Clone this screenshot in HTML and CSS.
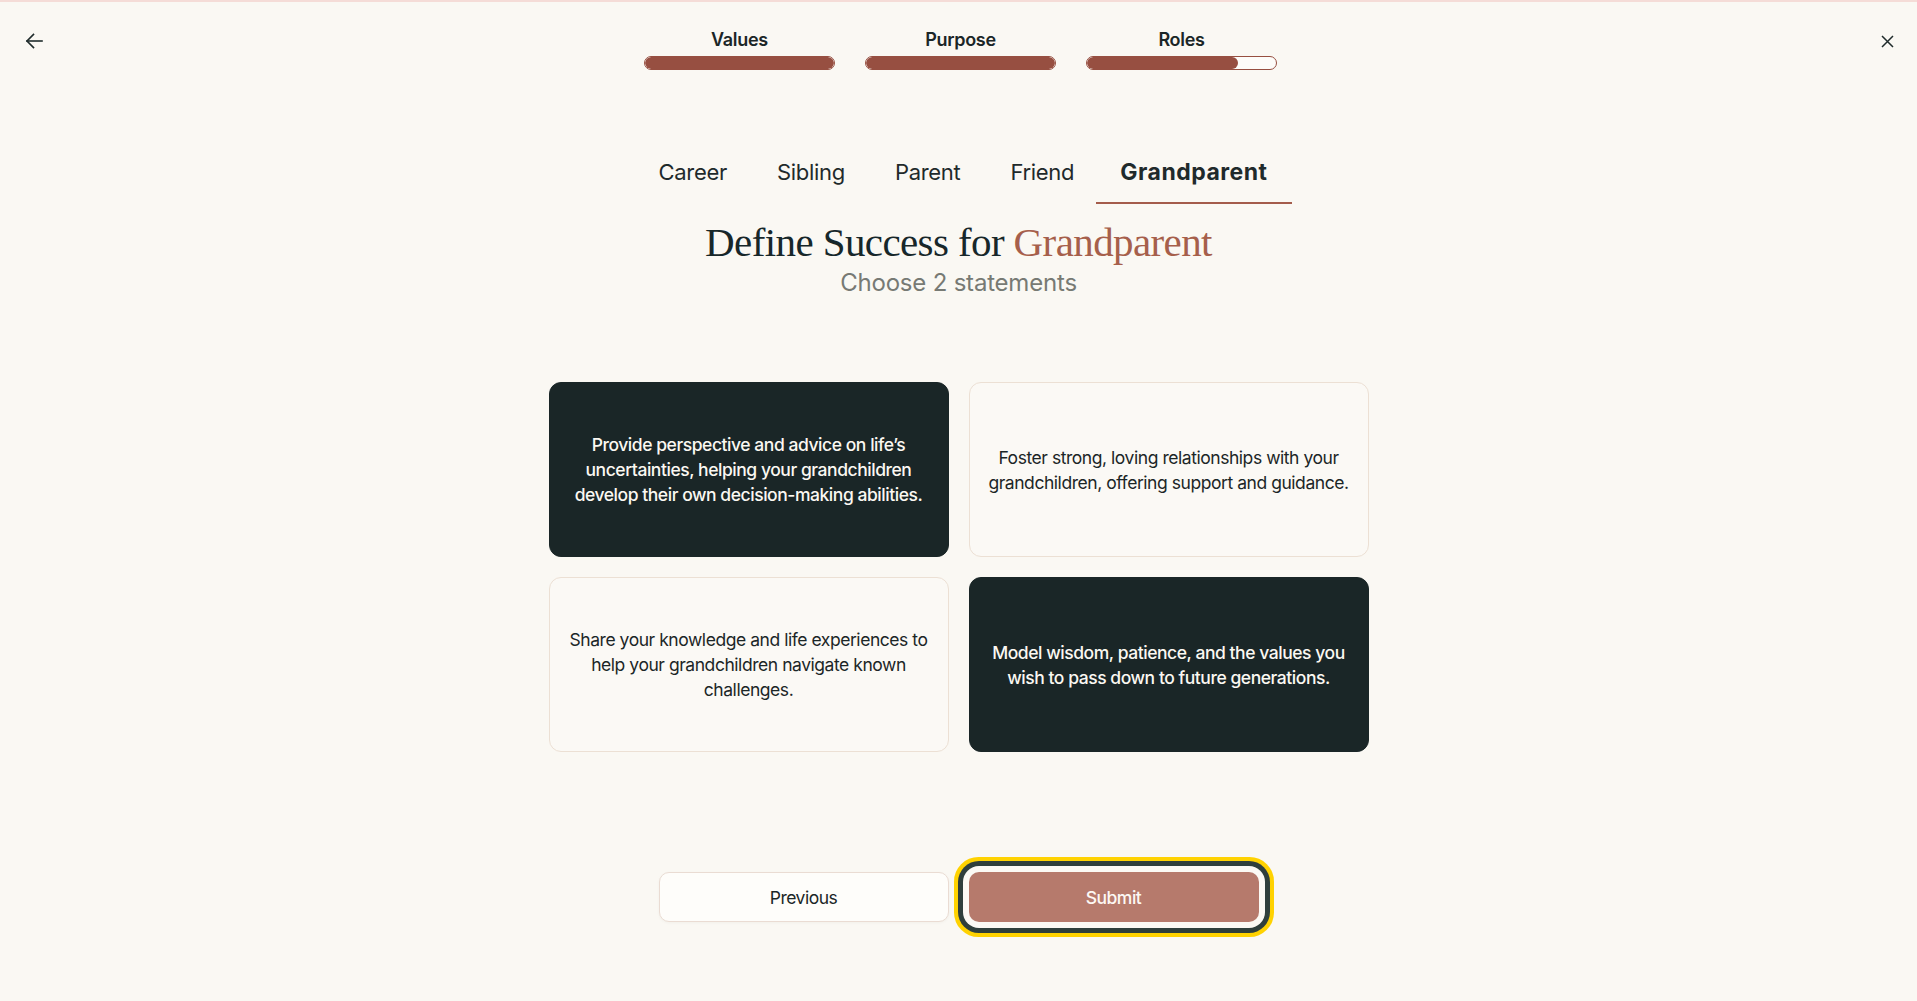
FILE: index.html
```html
<!DOCTYPE html>
<html lang="en">
<head>
<meta charset="utf-8">
<title>Define Success</title>
<link rel="stylesheet" href="styles.css">
</head>
<body>
<div class="page">
  <header class="topbar">
    <button class="icon-btn back" aria-label="Back">
      <svg width="18" height="16" viewBox="0 0 18 16" fill="none" stroke="#1f2b2b" stroke-width="1.6" stroke-linecap="square">
        <path d="M17 8H2"/>
        <path d="M8.5 1.5L2 8l6.5 6.5"/>
      </svg>
    </button>
    <div class="steps">
      <div class="step">
        <div class="step-label">Values</div>
        <div class="bar"><div class="fill" style="width:100%"></div></div>
      </div>
      <div class="step">
        <div class="step-label">Purpose</div>
        <div class="bar"><div class="fill" style="width:100%"></div></div>
      </div>
      <div class="step">
        <div class="step-label">Roles</div>
        <div class="bar"><div class="fill" style="width:80%"></div></div>
      </div>
    </div>
    <button class="icon-btn close" aria-label="Close">
      <svg width="13" height="13" viewBox="0 0 13 13" fill="none" stroke="#1f2b2b" stroke-width="1.5">
        <path d="M1 1l11 11M12 1L1 12"/>
      </svg>
    </button>
  </header>

  <nav class="tabs">
    <span class="tab">Career</span>
    <span class="tab">Sibling</span>
    <span class="tab">Parent</span>
    <span class="tab">Friend</span>
    <span class="tab active">Grandparent</span>
  </nav>

  <h1 class="title">Define Success for <span class="accent">Grandparent</span></h1>
  <p class="subtitle">Choose 2 statements</p>

  <div class="cards">
    <div class="card selected">Provide perspective and advice on life’s uncertainties, helping your grandchildren develop their own decision-making abilities.</div>
    <div class="card">Foster strong, loving relationships with your grandchildren, offering support and guidance.</div>
    <div class="card">Share your knowledge and life experiences to help your grandchildren navigate known challenges.</div>
    <div class="card selected">Model wisdom, patience, and the values you wish to pass down to future generations.</div>
  </div>

  <div class="actions">
    <button class="btn prev">Previous</button>
    <button class="btn submit">Submit</button>
  </div>
</div>
</body>
</html>
```

FILE: styles.css
```css
* { box-sizing: border-box; }

html, body {
  margin: 0;
  padding: 0;
}

body {
  background: #faf8f3;
  font-family: "Inter", "Liberation Sans", sans-serif;
  color: #1b2627;
  border-top: 2px solid #f5dcd7;
  height: 1001px;
  overflow: hidden;
}

.page {
  display: flex;
  flex-direction: column;
  align-items: center;
}

.topbar {
  width: 100%;
  display: grid;
  grid-template-columns: 1fr auto 1fr;
  align-items: start;
  padding: 0 20px 0 24px;
}

.icon-btn {
  background: none;
  border: none;
  padding: 0;
  width: 20px;
  height: 20px;
  display: flex;
  align-items: center;
  justify-content: center;
  margin-top: 29px;
  cursor: pointer;
}

.back { justify-self: start; }
.close { justify-self: end; }

.steps {
  display: flex;
  gap: 30px;
  padding-top: 27px;
}

.step {
  width: 191px;
  display: flex;
  flex-direction: column;
  align-items: center;
}

.step-label {
  font-size: 18px;
  font-weight: 600;
  line-height: 22px;
  letter-spacing: -0.3px;
  color: #1b2627;
}

.bar {
  margin-top: 5px;
  width: 100%;
  height: 14px;
  border: 1px solid #974f41;
  border-radius: 8px;
  background: #fdfcf9;
  overflow: hidden;
}

.fill {
  height: 100%;
  background: #974f41;
  border-radius: 8px;
}

.tabs {
  display: flex;
  gap: 6px;
  margin-top: 88px;
  margin-left: 11px;
}

.tab {
  font-size: 22px;
  line-height: 28px;
  padding: 0 22px 16px;
  border-bottom: 2px solid transparent;
  color: #1f2a2b;
  letter-spacing: -0.3px;
}

.tab.active {
  font-weight: 700;
  font-size: 23px;
  letter-spacing: 0.5px;
  padding: 0 24px 16px;
  margin-left: -6px;
  border-bottom-color: #a45c4b;
}

.title {
  margin: 14px 0 0;
  font-family: "Liberation Serif", "DejaVu Serif", serif;
  font-weight: 400;
  font-size: 41px;
  line-height: 48px;
  letter-spacing: -0.6px;
  color: #17272a;
}

.accent { color: #a65f4b; }

.subtitle {
  margin: 3px 0 0;
  font-size: 24px;
  line-height: 28px;
  color: #777a74;
  letter-spacing: -0.2px;
}

.cards {
  margin-top: 85px;
  display: grid;
  grid-template-columns: 400px 400px;
  grid-auto-rows: 175px;
  gap: 20px;
}

.card {
  display: flex;
  align-items: center;
  justify-content: center;
  text-align: center;
  padding: 0 14px;
  border: 1px solid #ece0d4;
  border-radius: 12px;
  background: #fbf9f5;
  font-size: 17.5px;
  line-height: 25px;
  letter-spacing: -0.45px;
  color: #1b2627;
}

.card.selected {
  background: #1a2627;
  border-color: #1a2627;
  color: #fbf8f2;
  font-weight: 500;
}

.actions {
  margin-top: 120px;
  display: flex;
  gap: 20px;
}

.btn {
  width: 290px;
  height: 50px;
  border-radius: 10px;
  font-family: "Inter", "Liberation Sans", sans-serif;
  font-size: 17.5px;
  letter-spacing: -0.5px;
  cursor: pointer;
}

.prev {
  background: #fefdfa;
  border: 1px solid #eadcd3;
  color: #1b2627;
  box-shadow: 0 1px 3px rgba(60, 40, 20, 0.04);
}

.submit {
  background: #b67a6c;
  border: none;
  color: #fdf8f4;
  font-weight: 500;
  box-shadow: 0 0 0 6px #fbf9f4, 0 0 0 11px #2f3f3c, 0 0 0 15px #ffd200;
}
```
